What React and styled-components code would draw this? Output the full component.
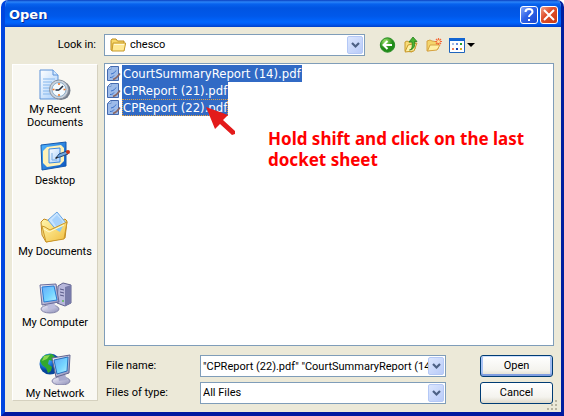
import React from "react";
import styled, { createGlobalStyle, css } from "styled-components";

const ui = 'Roboto, "Liberation Sans", Arial, sans-serif';

const GlobalStyle = createGlobalStyle`
  *, *::before, *::after { box-sizing: border-box; }
  body { margin: 0; background: #fff; font: 11px/14px ${ui}; color: #000; }
  button, input, select { font: inherit; color: inherit; margin: 0; }
  svg { display: block; flex: none; }
`;

const Dialog = styled.main`
  position: relative;
  display: flex;
  flex-direction: column;
  min-height: 100vh;
  margin-left: 1px;
  overflow: hidden;
  background: #ece9d8;
  border: solid;
  border-width: 0 3px 4px 4px;
  border-color: #0046e0 #001ea0 #0019a0 #0046e0;
  border-radius: 7px 7px 0 0;
`;

const TitleBar = styled.header`
  display: flex;
  align-items: center;
  gap: 2px;
  height: 27px;
  margin-left: -4px;
  margin-right: -3px;
  padding: 3px 6px 0 8px;
  background: linear-gradient(#0a3fc0 0, #2a84f8 2px, #0762ee 4px, #0054e2 8px, #0058ea 16px, #0066fe 22px, #005cf5 24px, #0040c8 27px);
`;

const Title = styled.h1`
  flex: 1;
  margin: 0;
  color: #fff;
  font: bold 13px/18px "DejaVu Sans", Verdana, sans-serif;
  text-shadow: 1px 1px #0a2a90;
`;

const CaptionButton = styled.button`
  display: grid;
  place-items: center;
  width: 18px;
  height: 18px;
  padding: 0;
  border: 1px solid #fff;
  border-radius: 3px;
  background: ${(p) =>
    p.$danger
      ? "linear-gradient(135deg, #f0a088, #e0502c 40%, #c83a14)"
      : "linear-gradient(135deg, #86a8f8, #2f62e8 45%, #1a48d0)"};
`;

const Body = styled.div`
  display: flex;
  flex: 1;
  flex-direction: column;
  gap: 7px;
  padding: 7px 7px 8px 7px;
`;

const LookRow = styled.div`
  display: grid;
  grid-template-columns: 84px minmax(0, 1fr) 181px;
  column-gap: 8px;
  align-items: center;
`;

const LookLabel = styled.label`
  text-align: right;
`;

const Tools = styled.div`
  display: flex;
  align-items: center;
  gap: 7px;
  padding-left: 6px;
`;

const ToolButton = styled.button`
  display: flex;
  align-items: center;
  gap: 2px;
  padding: 0;
  border: 0;
  background: none;
`;

const Combo = styled.div`
  position: relative;
  display: flex;
  align-items: center;
  height: 22px;
  min-width: 0;
  border: 1px solid #7f9db9;
  background: #fff;
`;

const control = css`
  flex: 1;
  min-width: 0;
  width: 100%;
  height: 20px;
  border: 0;
  padding: 0 20px 0 ${(p) => (p.$icon ? 25 : 2)}px;
  background: transparent;
  border-radius: 0;
  outline: none;
`;

const Select = styled.select`
  ${control}
  appearance: none;
`;

const TextBox = styled.input`
  ${control}
  padding-right: 0;
  margin-right: 17px;
`;

const ComboIcon = styled.span`
  position: absolute;
  left: 5px;
  top: 2px;
  pointer-events: none;
`;

const Arrow = styled.span`
  position: absolute;
  right: 1px;
  top: 1px;
  display: grid;
  place-items: center;
  width: 16px;
  height: 18px;
  border: 1px solid #b4c8f6;
  border-radius: 2px;
  background: linear-gradient(135deg, #dbe6fe, #b9cbf8);
  pointer-events: none;
`;

const Content = styled.div`
  display: grid;
  flex: 1;
  grid-template-columns: 86px minmax(0, 1fr);
  column-gap: 6px;
`;

const Places = styled.nav`
  display: flex;
  flex-direction: column;
  align-self: start;
  margin-top: 1px;
  padding-top: 4px;
  background: #f9f8f3;
  border: 1px solid #fff;
  border-right-color: #d5d1bf;
  border-bottom-color: #d5d1bf;
`;

const Place = styled.button`
  display: flex;
  flex-direction: column;
  align-items: center;
  gap: 2px;
  height: 71px;
  padding: 0;
  border: 0;
  background: none;
  line-height: 13px;

  &:last-child { height: 47px; }
`;

const PlaceName = styled.span`
  width: 74px;
`;

const Pane = styled.div`
  display: flex;
  flex-direction: column;
  gap: 9px;
`;

const Files = styled.ul`
  position: relative;
  flex: 1;
  margin: 0;
  padding: 1px;
  list-style: none;
  background: #fff;
  border: 1px solid #7f9db9;
`;

const File = styled.li`
  display: flex;
  align-items: center;
  height: 17px;
`;

const FileName = styled.span`
  height: 17px;
  padding: 0 1px;
  color: #fff;
  background: #316ac5;
  font: 13px/17px "DejaVu Sans Condensed", "Noto Sans", Verdana, sans-serif;
  outline: ${(p) => (p.$focused ? "1px dotted #e0a040" : "none")};
  outline-offset: -1px;
`;

const Note = styled.li`
  position: absolute;
  left: 163px;
  top: 64px;
  width: 270px;
  color: #f00;
  font: bold 17px/21px "Noto Sans", "Open Sans", sans-serif;
`;

const Pointer = styled.svg`
  position: absolute;
  left: 100px;
  top: 42px;
`;

const Form = styled.form`
  display: grid;
  grid-template-columns: 94px minmax(0, 1fr) 73px;
  gap: 5px 0;
  align-items: center;
  padding: 0 1px 0 2px;
`;

const PushButton = styled.button`
  height: 22px;
  padding: 0;
  border: 1px solid #003c74;
  border-radius: 3px;
  background: linear-gradient(#fff, #f4f3ee 70%, #dedacb);
  box-shadow: ${(p) => (p.$primary ? "inset 0 1px #cee0ff, inset 0 -2px #7f9de0, inset 2px 0 #a9c3f5, inset -2px 0 #a0bcf0" : "none")};
`;

const Field = styled.div`
  margin-right: 34px;
  min-width: 0;
`;

const Grip = styled.svg`
  position: absolute;
  right: 2px;
  bottom: 0;
`;

function Chevron() {
  return (
    <Arrow>
      <svg width="9" height="7" viewBox="0 0 9 7"><path d="M1 1l3.500 3.500L8 1" fill="none" stroke="#4d6185" strokeWidth="2.200" /></svg>
    </Arrow>
  );
}

function Folder() {
  return (
    <svg width="16" height="16" viewBox="0 0 16 16">
      <path d="M1 13V3.500L2 2h4l1.500 2H14v9.500H2z" fill="#f7d86c" stroke="#bd8b1b" />
      <path d="M3 6h12.500v1L14 14H2z" fill="#ffe995" stroke="#c79a2b" />
      <path d="M4 7.500h10" stroke="#fff9d8" />
    </svg>
  );
}

function PdfIcon() {
  return (
    <svg width="16" height="17" viewBox="0 0 16 17">
      <path d="M4.500 1.500h8v14h-11v-11z" fill="#9dbbe9" stroke="#4469ae" />
      <path d="M2 4.500h3V2" fill="#c4d8f6" stroke="#5f86c4" strokeWidth=".7" />
      <path d="M5 9c3-.5 4-2 5-3.500M4 12.500c2 0 3-.5 4-2" fill="none" stroke="#386fc9" />
      <path d="M7 14.500c3-1 5-3 7-6" fill="none" stroke="#8a6764" strokeWidth="1.500" />
    </svg>
  );
}

function Gradients() {
  return (
    <svg width="0" height="0" aria-hidden="true">
      <defs>
        <linearGradient id="screen" x1="0" y1="0" x2="1" y2="1"><stop stopColor="#67a9f8" /><stop offset=".55" stopColor="#74d4ff" /><stop offset="1" stopColor="#b9f1ff" /></linearGradient>
        <linearGradient id="metal" x1="0" y1="0" x2="1" y2="1"><stop stopColor="#f1f0fb" /><stop offset="1" stopColor="#8d8eb8" /></linearGradient>
        <linearGradient id="paper" x1="0" y1="0" x2="1" y2="1"><stop stopColor="#fff" /><stop offset="1" stopColor="#a5cdfa" /></linearGradient>
        <linearGradient id="gold" x1="0" y1="0" x2="1" y2="1"><stop stopColor="#fff6ad" /><stop offset="1" stopColor="#f1bd3c" /></linearGradient>
        <linearGradient id="blue" x1="0" y1="0" x2="1" y2="1"><stop stopColor="#54b8ff" /><stop offset="1" stopColor="#0752bf" /></linearGradient>
        <radialGradient id="globe" cx=".3" cy=".3"><stop stopColor="#83ceff" /><stop offset=".6" stopColor="#1f7ce0" /><stop offset="1" stopColor="#07459b" /></radialGradient>
        <radialGradient id="green" cx=".35" cy=".25"><stop stopColor="#9ee36a" /><stop offset="1" stopColor="#208b18" /></radialGradient>
      </defs>
    </svg>
  );
}

function RecentIcon() {
  return (
    <svg width="32" height="32" viewBox="0 0 32 32">
      <path d="M1 1h13l5 5v24H1z" fill="url(#paper)" stroke="#5c93d8" />
      <path d="M14 1v5h5" fill="#d2e8ff" stroke="#5c93d8" />
      <path d="M4 10h12M4 13h9M4 16h7M4 19h7M4 22h7M4 25h9" stroke="#85b7ed" />
      <ellipse cx="22" cy="21.500" rx="9.500" ry="9.500" fill="#767f8c" />
      <circle cx="20" cy="20.500" r="9.500" fill="#cad2dc" stroke="#87919e" />
      <circle cx="20" cy="20.500" r="7" fill="#f4fbff" stroke="#8cadc9" />
      <path d="M20 21l4-4M20 21h-3.500" stroke="#222e40" strokeWidth="1.600" />
      <path d="M20 14v2M20 25v2M13.500 20.500h2M24.500 20.500h2" stroke="#f07420" strokeWidth="1.500" />
    </svg>
  );
}

function DesktopIcon() {
  return (
    <svg width="32" height="32" viewBox="0 0 32 32">
      <path d="M2 5l25-3v24L3 30z" fill="url(#blue)" stroke="#1559ad" />
      <path d="M8 7l14-2 3 3v13l-4 4-13 2-4-4V11z" fill="#fff2b8" />
      <path d="M10 9l11-1v14l-11 1z" fill="url(#paper)" stroke="#3c8ae2" />
      <path d="M13 13v7h5" fill="none" stroke="#7caee3" />
      <path d="M17 18l3-4 8-3 1 3-8 3z" fill="#6fa5df" stroke="#244878" />
      <path d="M16.500 18.500l2-1.500" stroke="#222" strokeWidth="1.500" />
      <circle cx="29" cy="12" r="2" fill="#c4381d" />
    </svg>
  );
}

function DocumentsIcon() {
  return (
    <svg width="32" height="32" viewBox="0 0 32 32">
      <path d="M2 11l3-3 6 2 4 3 11-5 2 2-2 17-19 4-4-7z" fill="url(#gold)" stroke="#c18a22" />
      <path d="M9 9L18 1l9 11-8 9z" fill="#c8e4ff" stroke="#67a5e4" />
      <path d="M13 9l5-5 6 7-6 6z" fill="#91c6fa" opacity=".6" />
      <path d="M3 15l3 1 5 3 17-8-3 17-18 3z" fill="url(#gold)" stroke="#ca9628" />
      <path d="M16 18l8-3-3 6z" fill="#8bcaf5" />
      <path d="M5 18l5 3 15-7" fill="none" stroke="#fffad0" />
    </svg>
  );
}

function ComputerIcon() {
  return (
    <svg width="34" height="32" viewBox="0 0 34 32">
      <path d="M20 4l5-3 8 2v18l-6 3-8-3z" fill="#b8b8dc" stroke="#62638e" />
      <path d="M27 5l6-2v18l-6 3z" fill="#777aa9" />
      <path d="M22 7l4 1M22 10l4 1M22 13l4 1" stroke="#595b89" />
      <path d="M24 19h2" stroke="#74bb75" strokeWidth="2" />
      <ellipse cx="12" cy="27" rx="9" ry="4" fill="url(#metal)" stroke="#8384a8" />
      <path d="M9 21l7-1 2 6-8 1z" fill="#bcbddd" />
      <path d="M2 3l16-1 3 18-17 3z" fill="url(#metal)" stroke="#696b9a" />
      <path d="M4 5l12-1 3 14-13 2z" fill="url(#screen)" stroke="#297dd5" />
    </svg>
  );
}

function NetworkIcon() {
  return (
    <svg width="34" height="32" viewBox="0 0 34 32">
      <circle cx="12" cy="11" r="10.500" fill="url(#globe)" />
      <path d="M3 6l4-4 7-1 4 4-3 3-4-1-1 4 4 3-1 4-3 2-2-5-4-3-2-4z" fill="#32a82e" />
      <path d="M6 3l6-1-3 4-5 2z" fill="#8cd650" />
      <ellipse cx="23" cy="28" rx="9" ry="4" fill="url(#metal)" stroke="#8384a8" />
      <path d="M20 22l7-1 2 6-8 1z" fill="#a8a9cd" />
      <path d="M14 5l18-3-1 18-13 4z" fill="url(#metal)" stroke="#62648f" />
      <path d="M16 7l14-3-1 14-10 3z" fill="url(#screen)" stroke="#2770bd" />
    </svg>
  );
}

const places = [
  ["My Recent Documents", RecentIcon],
  ["Desktop", DesktopIcon],
  ["My Documents", DocumentsIcon],
  ["My Computer", ComputerIcon],
  ["My Network", NetworkIcon],
];

const files = ["CourtSummaryReport (14).pdf", "CPReport (21).pdf", "CPReport (22).pdf"];

export default function App() {
  return (
    <Dialog>
      <GlobalStyle />
      <TitleBar>
        <Title>Open</Title>
        <CaptionButton aria-label="Help"><svg width="12" height="14" viewBox="0 0 12 14"><path d="M2.500 4c0-4 7-4 7 0 0 2-3.500 2.500-3.500 5M6 11v2" fill="none" stroke="#fff" strokeWidth="2" /></svg></CaptionButton>
        <CaptionButton $danger aria-label="Close"><svg width="12" height="12" viewBox="0 0 12 12"><path d="M1 1l10 10M11 1L1 11" stroke="#fff" strokeWidth="2" /></svg></CaptionButton>
      </TitleBar>
      <Body>
        <LookRow>
          <LookLabel htmlFor="look">Look in:</LookLabel>
          <Combo>
            <ComboIcon><Folder /></ComboIcon>
            <Select id="look" $icon><option>chesco</option></Select>
            <Chevron />
          </Combo>
          <Tools>
            <ToolButton aria-label="Back">
              <svg width="17" height="16" viewBox="0 0 17 16"><circle cx="8.500" cy="8" r="7.200" fill="url(#green)" stroke="#288d25" /><path d="M13 8H5M8.500 4L4.500 8l4 4" fill="none" stroke="#fff" strokeWidth="2" /></svg>
            </ToolButton>
            <ToolButton aria-label="Up one level">
              <svg width="16" height="16" viewBox="0 0 16 16"><path d="M2 14V5l2-1 2 1 6-1v8l-3 3z" fill="#f7dc77" stroke="#c99a2b" /><path d="M2 15l3-7 9-2-3 8z" fill="#fff0a5" stroke="#c99a2b" /><path d="M6.500 13c3-1 3-4 2.500-8H6l4-5 4 4.500h-2.500c1 5-1 8-5 8.500z" fill="#48b331" stroke="#257e20" strokeWidth=".8" /></svg>
            </ToolButton>
            <ToolButton aria-label="New folder">
              <svg width="16" height="16" viewBox="0 0 16 16"><path d="M1 14V4l3-1 2 1 6 1v7z" fill="#f4d56b" stroke="#d6a342" /><path d="M1.500 14L4 8h10l-3 5z" fill="#fff0a4" stroke="#d6a342" /><path d="M12.500 1v7M9 4.500h7M10 2l5 5M15 2l-5 5" stroke="#f36b3a" strokeWidth="1.200" /><circle cx="12.500" cy="4.500" r="1.500" fill="#ffe39b" /></svg>
            </ToolButton>
            <ToolButton aria-label="View menu">
              <svg width="16" height="15" viewBox="0 0 16 15"><path d="M.5.5h15v14H.5z" fill="#fff" stroke="#1f65bd" /><path d="M0 0h16v3H0z" fill="#1265d2" /><path d="M3 5h2v2H3z" fill="#abbde3" /><path d="M7 5h2v2H7z" fill="#6a8ee0" /><path d="M11 5h2v2h-2z" fill="#219c34" /><path d="M3 10h2v2H3z" fill="#ee815d" /><path d="M7 10h2v2H7z" fill="#163daf" /><path d="M11 10h2v2h-2z" fill="#d6aa2c" /></svg>
              <svg width="8" height="4" viewBox="0 0 8 4"><path d="M0 0h8L4 4z" /></svg>
            </ToolButton>
          </Tools>
        </LookRow>
        <Content>
          <Places>
            {places.map(([name, Icon]) => (
              <Place key={name}><Icon /><PlaceName>{name}</PlaceName></Place>
            ))}
          </Places>
          <Pane>
            <Files role="listbox" aria-label="Files" aria-multiselectable="true">
              {files.map((name, i) => (
                <File key={name} role="option" aria-selected="true"><PdfIcon /><FileName $focused={i === 2}>{name}</FileName></File>
              ))}
              <Pointer width="32" height="32" viewBox="0 0 32 32" aria-hidden="true"><path d="M1 1l22 8-5 5 12 11v3l-3 1-12-11-5 5z" fill="#e31b1b" /></Pointer>
              <Note role="presentation">Hold shift and click on the last docket sheet</Note>
            </Files>
            <Form onSubmit={(e) => e.preventDefault()}>
              <label htmlFor="name">File name:</label>
              <Field><Combo><TextBox id="name" defaultValue={'"CPReport (22).pdf" "CourtSummaryReport (14'} /><Chevron /></Combo></Field>
              <PushButton $primary>Open</PushButton>
              <label htmlFor="type">Files of type:</label>
              <Field><Combo><Select id="type"><option>All Files</option></Select><Chevron /></Combo></Field>
              <PushButton type="button">Cancel</PushButton>
            </Form>
          </Pane>
        </Content>
      </Body>
      <Grip width="12" height="12" viewBox="0 0 12 12" aria-hidden="true"><path d="M8 0h2v2H8zM4 4h2v2H4zM8 4h2v2H8zM0 8h2v2H0zM4 8h2v2H4zM8 8h2v2H8z" fill="#b8b4a2" /></Grip>
      <Gradients />
    </Dialog>
  );
}
